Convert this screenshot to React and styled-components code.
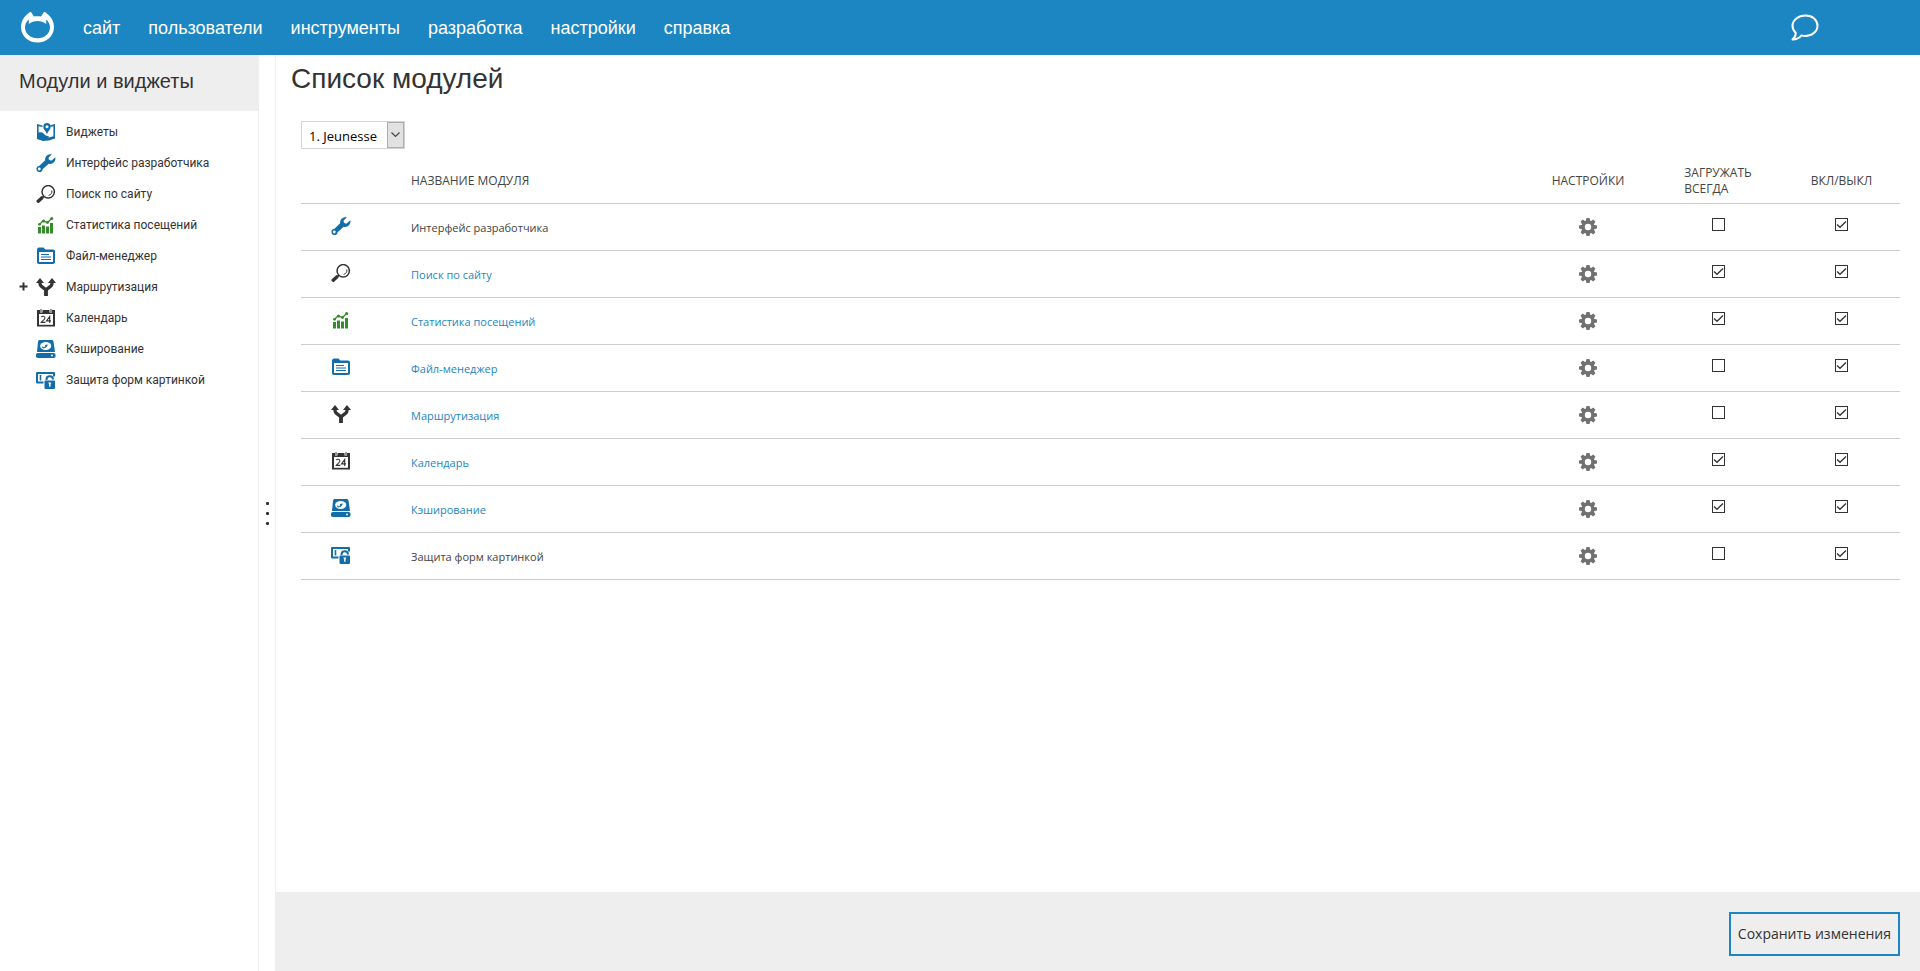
import React, { useState } from "react";
import styled, { createGlobalStyle } from "styled-components";

const blue = "#1b86c2";
const iconBlue = "#126da9";
const dark = "#333";
const green = "#388b2c";
const grey = "#eee";

const GlobalStyle = createGlobalStyle`
  *, *::before, *::after { box-sizing: border-box; }
  body {
    margin: 0;
    background: #fff;
    color: ${dark};
    font-family: "Open Sans", "Noto Sans", sans-serif;
    font-size: 12px;
  }
  a { color: inherit; text-decoration: none; }
`;

const Page = styled.div`
  display: flex;
  flex-direction: column;
  min-height: 100vh;
`;

const TopBar = styled.header`
  display: flex;
  align-items: center;
  height: 55px;
  padding: 0 101px 0 20px;
  background: ${blue};
  color: #fff;
`;

const LogoLink = styled.a`
  display: flex;
  margin-right: 28px;
`;

const Nav = styled.nav`
  display: flex;
  flex: 1;
  gap: 28px;
`;

const NavLink = styled.a`
  font-family: "Liberation Sans", Arial, sans-serif;
  font-size: 18px;
  line-height: 20px;
`;

const ChatButton = styled.button`
  display: flex;
  padding: 0;
  border: 0;
  background: none;
  color: inherit;
`;

const Body = styled.div`
  display: flex;
  flex: 1;
`;

const Sidebar = styled.aside`
  flex: 0 0 259px;
  border-right: 1px solid ${grey};
`;

const SidebarTitle = styled.h2`
  height: 56px;
  margin: 0;
  padding: 15px 19px;
  background: ${grey};
  font-family: "Liberation Sans", Arial, sans-serif;
  font-size: 20px;
  font-weight: 400;
  line-height: 23px;
`;

const ModuleNav = styled.ul`
  margin: 0;
  padding: 5px 0;
  list-style: none;
`;

const ModuleItem = styled.li`
  display: grid;
  grid-template-columns: 36px 30px 1fr;
  align-items: center;
  height: 31px;
  font-family: Roboto, sans-serif;
  line-height: 16px;
`;

const ExpandButton = styled.button`
  display: flex;
  justify-self: end;
  margin-right: 8px;
  padding: 0;
  border: 0;
  background: none;
  color: ${dark};
`;

const Splitter = styled.div`
  display: flex;
  flex: 0 0 17px;
  flex-direction: column;
  align-items: center;
  justify-content: center;
  gap: 7px;
  border-right: 1px solid ${grey};
`;

const Dot = styled.span`
  width: 3px;
  height: 3px;
  border-radius: 1px;
  background: ${dark};
`;

const Main = styled.main`
  display: flex;
  flex: 1;
  flex-direction: column;
  min-width: 0;
`;

const Content = styled.div`
  flex: 1;
  padding: 0 20px 20px 25px;
`;

const PageTitle = styled.h1`
  margin: 0 0 26px -10px;
  padding-top: 8px;
  font-family: "Liberation Sans", Arial, sans-serif;
  font-size: 28px;
  font-weight: 400;
  line-height: 32px;
`;

const SelectBox = styled.div`
  display: inline-grid;
  grid-template-columns: 1fr 17px;
  width: 104px;
  height: 28px;
  margin-bottom: 8px;
  padding: 0;
  border: 1px solid #d4d4d4;
  vertical-align: top;
`;

const SiteSelect = styled.select`
  grid-area: 1 / 1 / 2 / 3;
  padding: 1px 0 0 7px;
  border: 0;
  appearance: none;
  background: #fff;
  color: #000;
  font-family: "Open Sans", "Noto Sans", sans-serif;
  font-size: 13px;
  line-height: 20px;
`;

const SelectArrow = styled.span`
  display: flex;
  grid-area: 1 / 2;
  align-items: center;
  justify-content: center;
  border: 1px solid #adadad;
  background: #e1e1e1;
  pointer-events: none;
  z-index: 1;
`;

const ModuleTable = styled.table`
  width: 100%;
  border-spacing: 0;
  line-height: 16px;
  table-layout: fixed;
`;

const Col = styled.col`
  width: ${(p) => p.$width};
`;

const HeadCell = styled.th`
  height: 47px;
  padding: ${(p) => (p.$name ? "1px 0 0 30px" : "1px 0 0")};
  border-bottom: 1px solid #ccc;
  color: #444;
  font-weight: 400;
  text-align: ${(p) => (p.$name ? "left" : "center")};
  text-transform: uppercase;
`;

const HeadText = styled.span`
  display: inline-block;
  text-align: left;
`;

const Cell = styled.td`
  height: 47px;
  padding: 0;
  border-bottom: 1px solid #ccc;
  text-align: center;
`;

const IconCell = styled(Cell)`
  padding-bottom: 2px;
`;

const NameCell = styled(Cell)`
  padding: 2px 0 0 30px;
  color: #444;
  font-size: 11px;
  text-align: left;
`;

const ModuleLink = styled.a`
  color: ${blue};
`;

const GearButton = styled.button`
  padding: 0;
  border: 0;
  background: none;
  vertical-align: middle;
  line-height: 0;
`;

const CheckBox = styled.span`
  display: inline-grid;
  margin-bottom: 5px;
  vertical-align: middle;
`;

const CheckInput = styled.input`
  grid-area: 1 / 1;
  width: 13px;
  height: 13px;
  margin: 0;
  border: 1px solid ${dark};
  appearance: none;
  background: #fff;
`;

const CheckMark = styled.svg`
  grid-area: 1 / 1;
  z-index: 1;
  pointer-events: none;
`;

const Footer = styled.footer`
  display: flex;
  justify-content: flex-end;
  padding: 20px 20px 15px;
  background: ${grey};
`;

const SaveButton = styled.button`
  height: 44px;
  padding: 0 7px 2px;
  border: 2px solid ${blue};
  background: transparent;
  color: ${dark};
  font-family: "Open Sans", "Noto Sans", sans-serif;
  font-size: 14px;
`;

const IconSvg = styled.svg`
  display: inline-block;
  flex: none;
  vertical-align: middle;
`;

const icons = {
  map: (
    <g>
      <path d="M1 1l5.500 1.500v1.600L2.600 3.300v6.200c2.400-.6 4.300 0 5.400 1.500 1.200 1.600 2.700 2 4.700 2.200v1.300l4.700-1.200V3.300l-3 .7V2.300L19 1v14.500L13 17.500 7 18 1 16z" fill={iconBlue} />
      <path d="M11 0a3.700 3.700 0 0 1 3.700 3.700c0 2.500-2.200 3.800-3.700 7.300-1.500-3.500-3.700-4.800-3.700-7.300A3.700 3.700 0 0 1 11 0z" fill={iconBlue} />
      <circle cx="11" cy="3.700" r="1.500" fill="#fff" />
    </g>
  ),
  wrench: (
    <g>
      <path
        d="M15.800.4 12.800 3.300c-.7 2 .8 3.700 2.900 3.100L19.300 3.200c.9 4-2.600 7.600-6.600 6.500L6.600 15.200c-.2 2.400-2.400 3.600-4.400 2.600C-.1 16.600-.1 13.500 1.900 12.300c.5-.3 1-.4 1.500-.5L9.200 6.300C8.500 2.700 12-.7 15.800.4z"
        fill={iconBlue}
      />
      <circle cx="3.300" cy="15" r="1.400" fill="#fff" />
    </g>
  ),
  search: (
    <g fill="none" stroke={dark}>
      <circle cx="12.200" cy="6.800" r="6.200" strokeWidth="1.500" />
      <path d="M15.800 5.500c.5 2.600-.8 4.300-3.200 4.900" strokeWidth="1" />
      <path d="M8.200 11.200 6 13" strokeWidth="1.500" />
      <path d="M5.800 12.900 2.200 16.200" strokeWidth="3.400" strokeLinecap="round" />
    </g>
  ),
  stats: (
    <g fill={green}>
      <path d="M2 11h3v6.500H2zM6 9.500h3v8H6zM10 10.500h3v7h-3zM14 7h3v10.500h-3z" />
      <path d="M3.500 8.500 7 4.800 11.500 6.500 15.700 2.500" fill="none" stroke={green} strokeWidth="1.300" />
      <circle cx="3.500" cy="8.300" r="1.400" />
      <circle cx="7.500" cy="5" r="1.600" />
      <circle cx="11.500" cy="6.500" r="1.400" />
      <circle cx="15.700" cy="2.500" r="1.600" />
    </g>
  ),
  folder: (
    <g>
      <path d="M1 3c0-1.500.8-2.500 2-2.500h4.500L9.300 2.500H17c1.200 0 2 .8 2 2V15c0 1.200-.8 2-2 2H3c-1.200 0-2-.8-2-2z" fill={iconBlue} />
      <path d="M3 5h14v10H3z" fill="#fff" />
      <path d="M5 7.500h8M5 10h10M5 12.500h10" stroke={iconBlue} strokeWidth="1.200" />
    </g>
  ),
  route: (
    <g>
      <path d="M4 4v1.500c0 4.500 6 3.500 6 8v4.500M16 4v1.500c0 4.500-6 3.500-6 8" fill="none" stroke={dark} strokeWidth="3.200" />
      <path d="M0 5 4 0l4 5zM12 5l4-5 4 5z" fill={dark} />
      <path d="M8.200 10.500h3.600V18H8.200z" fill={dark} />
    </g>
  ),
  calendar: (
    <g>
      <path d="M1 1h3v2.500h2.500V1h7v2.500H16V1h3v16.500H1z" fill={dark} />
      <path d="M5 0v3M15 0v3" stroke={dark} strokeWidth="1" />
      <path d="M3 5h14v10.800H3z" fill="#fff" />
      <path d="M5.300 8C6 6.900 8.900 6.800 8.900 8.900c0 1.500-2.400 2.800-3.600 4.500H9.300M13.700 14V7.500L10.500 11.900H15" fill="none" stroke={dark} strokeWidth="1.100" />
    </g>
  ),
  disk: (
    <g>
      <path d="M4 0h11.500c1.200 0 1.800.6 2 1.700L19 12H1L2 1.700C2.200.6 2.800 0 4 0z" fill={iconBlue} />
      <rect x="0" y="13" width="19.500" height="5" rx="1.800" fill={iconBlue} />
      <ellipse cx="9.700" cy="6" rx="5.600" ry="4" fill="#fff" />
      <path d="M10.200 6.300c-1 2-3.500 1.800-3.700.4M9.400 6c.6-1 1.800-1.200 2.200-.6" fill="none" stroke={iconBlue} strokeWidth="1.200" />
      <circle cx="9.900" cy="6" r="1.100" fill={iconBlue} />
      <circle cx="16" cy="15.500" r="1" fill="#fff" />
    </g>
  ),
  lock: (
    <g>
      <path d="M7.500 11.500H1V2h17v3.500" fill="none" stroke={iconBlue} strokeWidth="2" strokeLinejoin="round" />
      <path d="M4.500 4v5.500" stroke={iconBlue} strokeWidth="1.600" />
      <path d="M10.500 9V8.500c0-4.300 6.500-4.300 6.500 0" fill="none" stroke={iconBlue} strokeWidth="2" />
      <path d="M9.500 9.500H18c.7 0 1 .4 1 1v6c0 1-.6 1.500-1.500 1.500H10c-1 0-1.500-.5-1.500-1.500v-6c0-.6.400-1 1-1z" fill={iconBlue} />
      <path d="M12.300 11.500h3l-.8 2v2.300h-1.400v-2.300z" fill="#fff" />
    </g>
  ),
};

function ModuleIcon({ name }) {
  return (
    <IconSvg width="20" height="18" viewBox="0 0 20 18" aria-hidden="true">
      {icons[name]}
    </IconSvg>
  );
}

function Logo() {
  return (
    <svg width="35" height="33" viewBox="0 0 35 33" aria-hidden="true">
      <path
        fill="#fff"
        fillRule="evenodd"
        d="M11 1 14 5.500c2.200-.5 5-.5 7 0L24 1c1 0 2 .3 2.500 1.200C31 5.500 34 10 34 16.200 34 25 26.500 31.500 17.500 31.500S1 25 1 16.200C1 10 4 5.500 8.500 2.200 9 1.300 10 1 11 1zM8.800 8.500C6.500 10.300 5 13.200 5 16.200c0 6.300 5.500 11 12.500 11S30 22.500 30 16.200c0-3-1.500-5.900-3.800-7.700V13C21.500 9 13.500 9 8.800 13z"
      />
    </svg>
  );
}

function ChatIcon() {
  return (
    <svg width="28" height="27" viewBox="0 0 28 27" aria-hidden="true">
      <path
        fill="none"
        stroke="#fff"
        strokeWidth="2"
        strokeLinejoin="round"
        d="M14.500 1.500C21.500 1.500 26.500 6 26.500 11.800S21 22 14.500 22c-1.500 0-2.700-.2-4-.6C8 24.500 5 25.500 1.500 25.500c2-1.700 3.200-3.300 3.300-6.600C2.800 17 1.500 14.500 1.500 11.800 1.500 6 7.500 1.500 14.500 1.500z"
      />
    </svg>
  );
}

function GearIcon() {
  return (
    <IconSvg width="18" height="18" viewBox="-9 -9 18 18" aria-hidden="true">
      <g fill="#717171">
        {[0, 45, 90, 135].map((angle) => (
          <path key={angle} transform={`rotate(${angle})`} d="M-2.100-6.500-1.500-9h3l.6 2.500v13L1.500 9h-3l-.6-2.500z" />
        ))}
        <circle r="6.700" />
      </g>
      <circle r="3.200" fill="#fff" />
    </IconSvg>
  );
}

function ModuleCheck({ label, initial }) {
  const [checked, setChecked] = useState(initial);
  return (
    <CheckBox>
      <CheckInput type="checkbox" aria-label={label} checked={checked} onChange={(e) => setChecked(e.target.checked)} />
      {checked && (
        <CheckMark width="13" height="13" viewBox="0 0 13 13" aria-hidden="true">
          <path d="M2 6.500 5 9.300 11 3.500" fill="none" stroke={dark} strokeWidth="1.300" />
        </CheckMark>
      )}
    </CheckBox>
  );
}

const menu = ["сайт", "пользователи", "инструменты", "разработка", "настройки", "справка"];

const modules = [
  { icon: "wrench", title: "Интерфейс разработчика", always: false, plain: true },
  { icon: "search", title: "Поиск по сайту", always: true },
  { icon: "stats", title: "Статистика посещений", always: true },
  { icon: "folder", title: "Файл-менеджер", always: false },
  { icon: "route", title: "Маршрутизация", always: false, expandable: true },
  { icon: "calendar", title: "Календарь", always: true },
  { icon: "disk", title: "Кэширование", always: true },
  { icon: "lock", title: "Защита форм картинкой", always: false, plain: true },
];

const sidebarItems = [{ icon: "map", title: "Виджеты" }, ...modules];

export default function App() {
  return (
    <Page>
      <GlobalStyle />
      <TopBar>
        <LogoLink href="#" aria-label="Главная">
          <Logo />
        </LogoLink>
        <Nav>
          {menu.map((item) => (
            <NavLink href="#" key={item}>{item}</NavLink>
          ))}
        </Nav>
        <ChatButton type="button" aria-label="Сообщения">
          <ChatIcon />
        </ChatButton>
      </TopBar>
      <Body>
        <Sidebar>
          <SidebarTitle>Модули и виджеты</SidebarTitle>
          <ModuleNav>
            {sidebarItems.map((item) => (
              <ModuleItem key={item.title}>
                {item.expandable ? (
                  <ExpandButton type="button" aria-label="Развернуть">
                    <svg width="9" height="9" viewBox="0 0 9 9" aria-hidden="true">
                      <path d="M4.500.5v8M.5 4.500h8" stroke="currentColor" strokeWidth="2" />
                    </svg>
                  </ExpandButton>
                ) : (
                  <span />
                )}
                <ModuleIcon name={item.icon} />
                <a href="#">{item.title}</a>
              </ModuleItem>
            ))}
          </ModuleNav>
        </Sidebar>
        <Splitter>
          <Dot />
          <Dot />
          <Dot />
        </Splitter>
        <Main>
          <Content>
            <PageTitle>Список модулей</PageTitle>
            <SelectBox>
              <SiteSelect aria-label="Сайт">
                <option>1. Jeunesse</option>
              </SiteSelect>
              <SelectArrow>
                <svg width="9" height="6" viewBox="0 0 9 6" aria-hidden="true">
                  <path d="M.5.5l4 4 4-4" fill="none" stroke="#444" strokeWidth="1.200" />
                </svg>
              </SelectArrow>
            </SelectBox>
            <ModuleTable>
              <colgroup>
                <Col $width="80px" />
                <Col $width="auto" />
                <Col $width="130px" />
                <Col $width="130px" />
                <Col $width="117px" />
              </colgroup>
              <thead>
                <tr>
                  <HeadCell />
                  <HeadCell $name scope="col">Название модуля</HeadCell>
                  <HeadCell scope="col">Настройки</HeadCell>
                  <HeadCell scope="col">
                    <HeadText>Загружать<br />всегда</HeadText>
                  </HeadCell>
                  <HeadCell scope="col">Вкл/выкл</HeadCell>
                </tr>
              </thead>
              <tbody>
                {modules.map((m) => (
                  <tr key={m.title}>
                    <IconCell><ModuleIcon name={m.icon} /></IconCell>
                    <NameCell>{m.plain ? m.title : <ModuleLink href="#">{m.title}</ModuleLink>}</NameCell>
                    <Cell>
                      <GearButton type="button" aria-label={`Настройки: ${m.title}`}>
                        <GearIcon />
                      </GearButton>
                    </Cell>
                    <Cell><ModuleCheck label={`Загружать всегда: ${m.title}`} initial={m.always} /></Cell>
                    <Cell><ModuleCheck label={`Включить: ${m.title}`} initial /></Cell>
                  </tr>
                ))}
              </tbody>
            </ModuleTable>
          </Content>
          <Footer>
            <SaveButton type="button">Сохранить изменения</SaveButton>
          </Footer>
        </Main>
      </Body>
    </Page>
  );
}
